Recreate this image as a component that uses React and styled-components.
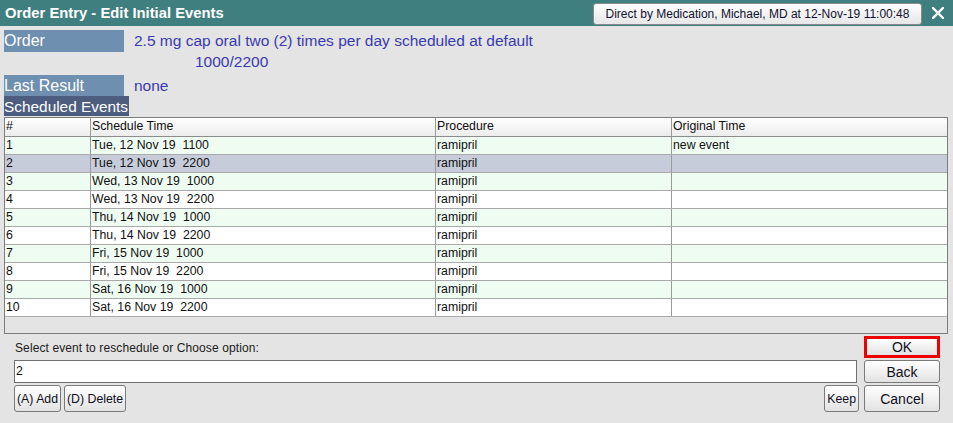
import React from 'react'
import styled, { createGlobalStyle } from 'styled-components'

const GlobalStyle = createGlobalStyle`
    html, body {
        margin: 0;
        padding: 0;
        background: #e4e4e4;
        font-family: "Liberation Sans", Arial, sans-serif;
    }
`

const Window = styled.div`
    width: 953px;
    height: 423px;
    display: flex;
    flex-direction: column;
    background: #e4e4e4;
    overflow: hidden;
`

const TitleBar = styled.div`
    height: 26px;
    background: #407f7f;
    display: flex;
    align-items: center;
    padding: 0 0 0 5px;
    box-sizing: border-box;
`

const Title = styled.div`
    flex: 1;
    color: #ffffff;
    font-weight: bold;
    font-size: 14.8px;
`

const ProviderButton = styled.button`
    height: 22px;
    width: 329px;
    margin-top: 1px;
    border: 1px solid #8a8a8a;
    border-radius: 3px;
    background: linear-gradient(#ffffff, #e6e6e6);
    font-family: inherit;
    font-size: 12px;
    color: #101030;
    padding: 0;
`

const CloseButton = styled.div`
    width: 31px;
    display: flex;
    justify-content: center;
    align-items: center;
`

const Body = styled.div`
    padding: 4px 5px 0 4px;
    display: flex;
    flex-direction: column;
`

const InfoRow = styled.div`
    display: flex;
    align-items: flex-start;
    gap: 10px;
`

const InfoLabel = styled.div`
    width: ${p => p.$width || 120}px;
    height: ${p => p.$height || 22}px;
    flex-shrink: 0;
    background: ${p => p.$dark ? '#4d5d7f' : '#6f8fb0'};
    color: #ffffff;
    font-size: ${p => p.$dark ? 15.4 : 16}px;
    line-height: 21px;
    white-space: nowrap;
    overflow: hidden;
`

const InfoValue = styled.div`
    color: #3a3ab0;
    font-size: 15.5px;
    line-height: 21px;
`

const ValueLine = styled.div`
    padding-left: ${p => p.$indent || 0}px;
`

const Gap = styled.div`
    height: ${p => p.$h}px;
`

const Table = styled.div`
    margin-top: 1px;
    width: 944px;
    height: 217px;
    box-sizing: border-box;
    border: 1px solid #7c7c7c;
    background: #e4e4e4;
    display: flex;
    flex-direction: column;
`

const Row = styled.div`
    display: grid;
    grid-template-columns: 85px 345px 236px 1fr;
    height: 18px;
    box-sizing: border-box;
    border-bottom: 1px solid #a9a9a9;
    background: ${p => p.$header ? 'linear-gradient(#ffffff, #ececec)' : p.$selected ? '#c7ccda' : p.$alt ? '#effcf2' : '#ffffff'};
    ${p => p.$header && 'border-bottom: 1px solid #8c8c8c; height: 19px;'}
`

const Cell = styled.div`
    font-size: 12.3px;
    line-height: 17px;
    color: #101010;
    padding-left: 1px;
    white-space: pre;
    overflow: hidden;
    border-left: ${p => p.$first ? 'none' : '1px solid #9a9a9a'};
`

const Footer = styled.div`
    display: grid;
    grid-template-columns: 845px 76px;
    column-gap: 5px;
    padding: 2px 0 0 14px;
`

const Stack = styled.div`
    display: grid;
    grid-template-rows: 22px 23px 27px;
    row-gap: 2px;
`

const Prompt = styled.div`
    font-size: 12px;
    color: #202020;
    padding: 5px 0 0 1px;
    letter-spacing: 0.1px;
`

const Input = styled.div`
    width: 843px;
    box-sizing: border-box;
    border: 1px solid #707070;
    background: #ffffff;
    font-size: 12.3px;
    line-height: 20px;
    padding-left: 1px;
    color: #101010;
`

const ButtonRow = styled.div`
    display: flex;
    gap: 3px;
    align-items: stretch;
`

const Spacer = styled.div`
    flex: 1;
`

const Button = styled.button`
    box-sizing: border-box;
    height: 100%;
    padding: 0 2px;
    border: ${p => p.$focused ? '3px solid #ee0000' : '1px solid #7a7a7a'};
    border-radius: ${p => p.$focused ? '0' : '3px'};
    background: linear-gradient(#ffffff, #e2e2e2);
    font-family: inherit;
    font-size: ${p => p.$big ? 14 : 12.3}px;
    color: #101020;
`

const rows = [
    ['1', 'Tue, 12 Nov 19  1100', 'ramipril', 'new event'],
    ['2', 'Tue, 12 Nov 19  2200', 'ramipril', ''],
    ['3', 'Wed, 13 Nov 19  1000', 'ramipril', ''],
    ['4', 'Wed, 13 Nov 19  2200', 'ramipril', ''],
    ['5', 'Thu, 14 Nov 19  1000', 'ramipril', ''],
    ['6', 'Thu, 14 Nov 19  2200', 'ramipril', ''],
    ['7', 'Fri, 15 Nov 19  1000', 'ramipril', ''],
    ['8', 'Fri, 15 Nov 19  2200', 'ramipril', ''],
    ['9', 'Sat, 16 Nov 19  1000', 'ramipril', ''],
    ['10', 'Sat, 16 Nov 19  2200', 'ramipril', ''],
]

export default function App() {
    return (
        <Window>
            <GlobalStyle />
            <TitleBar>
                <Title>Order Entry - Edit Initial Events</Title>
                <ProviderButton>Direct by Medication, Michael, MD at 12-Nov-19 11:00:48</ProviderButton>
                <CloseButton>
                    <svg width="12" height="12" viewBox="0 0 12 12">
                        <path d="M1 1 L11 11 M11 1 L1 11" stroke="#ffffff" strokeWidth="2.4" strokeLinecap="square" />
                    </svg>
                </CloseButton>
            </TitleBar>
            <Body>
                <InfoRow>
                    <InfoLabel>Order</InfoLabel>
                    <InfoValue>
                        <ValueLine>2.5 mg cap oral two (2) times per day scheduled at default</ValueLine>
                        <ValueLine $indent={61}>1000/2200</ValueLine>
                    </InfoValue>
                </InfoRow>
                <Gap $h={3} />
                <InfoRow>
                    <InfoLabel $height={21}>Last Result</InfoLabel>
                    <InfoValue>none</InfoValue>
                </InfoRow>
                <InfoLabel $dark $width={125} $height={20}>Scheduled Events</InfoLabel>
                <Table>
                    <Row $header>
                        <Cell $first>#</Cell>
                        <Cell>Schedule Time</Cell>
                        <Cell>Procedure</Cell>
                        <Cell>Original Time</Cell>
                    </Row>
                    {rows.map((r, i) => (
                        <Row key={r[0]} $alt={i % 2 === 0} $selected={i === 1}>
                            <Cell $first>{r[0]}</Cell>
                            <Cell>{r[1]}</Cell>
                            <Cell>{r[2]}</Cell>
                            <Cell>{r[3]}</Cell>
                        </Row>
                    ))}
                </Table>
            </Body>
            <Footer>
                <Stack>
                    <Prompt>Select event to reschedule or Choose option:</Prompt>
                    <Input>2</Input>
                    <ButtonRow>
                        <Button>(A) Add</Button>
                        <Button>(D) Delete</Button>
                        <Spacer />
                        <Button>Keep</Button>
                    </ButtonRow>
                </Stack>
                <Stack>
                    <Button $focused $big>OK</Button>
                    <Button $big>Back</Button>
                    <Button $big>Cancel</Button>
                </Stack>
            </Footer>
        </Window>
    )
}
